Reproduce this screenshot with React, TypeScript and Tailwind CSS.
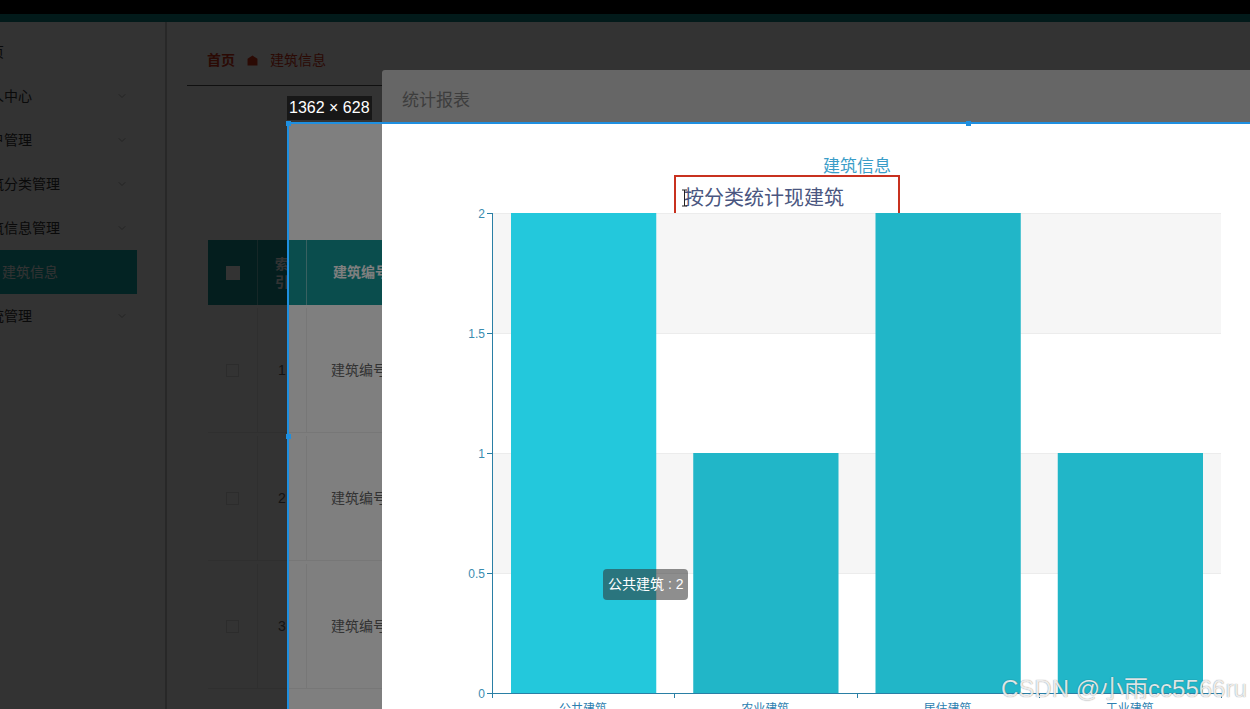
import { ChevronDown } from "lucide-react";

const menu = [
  { label: "首页", arrow: false },
  { label: "个人中心", arrow: true },
  { label: "用户管理", arrow: true },
  { label: "建筑分类管理", arrow: true },
  { label: "建筑信息管理", arrow: true },
];

const rows = [1, 2, 3];

const categories = [
  { name: "公共建筑", value: 2 },
  { name: "农业建筑", value: 1 },
  { name: "居住建筑", value: 2 },
  { name: "工业建筑", value: 1 },
];

const FONT = "'Liberation Sans','Noto Sans CJK SC',sans-serif";

function Sidebar() {
  return (
    <aside className="w-[167px] shrink-0 overflow-hidden border-r-2 border-[#c8c8c8] bg-white pt-[8px]">
      {menu.map((m) => (
        <div key={m.label} className="flex h-[44px] w-[137px] items-center justify-between pr-[9px]">
          <span className="-ml-[24px] whitespace-nowrap text-[14px] text-[#333]">{m.label}</span>
          {m.arrow && <ChevronDown size={12} strokeWidth={1.5} className="text-[#999]" />}
        </div>
      ))}
      <div className="flex h-[44px] w-[137px] items-center bg-[#10b0b0]">
        <span className="ml-[2px] text-[14px] text-white">建筑信息</span>
      </div>
      <div className="flex h-[44px] w-[137px] items-center justify-between pr-[9px]">
        <span className="-ml-[24px] whitespace-nowrap text-[14px] text-[#333]">系统管理</span>
        <ChevronDown size={12} strokeWidth={1.5} className="text-[#999]" />
      </div>
    </aside>
  );
}

function Breadcrumb() {
  return (
    <div className="ml-[20px] flex h-[64px] items-end border-b border-[#555] pb-[15px] pl-[20px]">
      <div className="flex items-center text-[14px] leading-[20px] text-[#d83418]">
        <span className="font-semibold">首页</span>
        <svg width="11" height="11" viewBox="0 0 10 10" className="mx-[12px]">
          <path d="M5 0.5 L9.5 3.5 L9.5 9.5 L0.5 9.5 L0.5 3.5 Z" fill="#d83418" />
        </svg>
        <span>建筑信息</span>
      </div>
    </div>
  );
}

function Table() {
  return (
    <div className="ml-[41px] mt-[154px] w-[900px]">
      <div className="grid h-[65px] grid-cols-[50px_49px_1fr] bg-[#149a9a] text-[14px] font-bold text-white">
        <div className="flex items-center justify-center border-r border-white/40">
          <span className="h-[14px] w-[14px] bg-white" />
        </div>
        <div className="flex items-center justify-center border-r border-white/40">
          <span className="w-[14px] leading-[18px]">索引</span>
        </div>
        <div className="flex items-center pl-[26px]">建筑编号</div>
      </div>
      {rows.map((r) => (
        <div
          key={r}
          className="grid h-[128px] grid-cols-[50px_49px_1fr] border-b border-[#eee] bg-white pt-[3px] text-[14px] text-[#666]"
        >
          <div className="flex items-center justify-center border-r border-[#eee]">
            <span className="h-[13px] w-[13px] border border-[#ddd] bg-white" />
          </div>
          <div className="flex items-center justify-center border-r border-[#eee]">{r}</div>
          <div className="flex items-center pl-[24px]">建筑编号{r}</div>
        </div>
      ))}
    </div>
  );
}

function Chart() {
  const left = 492;
  const right = 1221;
  const top = 213;
  const bottom = 693;
  const slot = (right - left) / 4;
  const yFor = (v: number) => bottom - (v / 2) * (bottom - top);
  const ticks = [
    { v: 2, label: "2" },
    { v: 1.5, label: "1.5" },
    { v: 1, label: "1" },
    { v: 0.5, label: "0.5" },
    { v: 0, label: "0" },
  ];
  return (
    <svg width="900" height="620" className="block" fontFamily={FONT}>
      <g transform="translate(-382,-123)">
        <text x="857" y="172" textAnchor="middle" fontSize="17" fill="#3a9dc8">
          建筑信息
        </text>
        <text x="684" y="205" fontSize="20" fill="#4a5680">
          按分类统计现建筑
        </text>
        <rect x="675" y="176" width="224" height="42" fill="none" stroke="#c8311f" strokeWidth="2" />
        <path d="M682 190 h5 M684.5 190 v16 M682 206 h5" stroke="#222" strokeWidth="1" fill="none" />

        <rect x={left} y={top} width={right - left} height="120" fill="#f6f6f6" />
        <rect x={left} y={top + 240} width={right - left} height="120" fill="#f6f6f6" />
        {[213, 333, 453, 573].map((y) => (
          <line key={y} x1={left} x2={right} y1={y + 0.5} y2={y + 0.5} stroke="#ececec" />
        ))}

        {categories.map((c, i) => {
          const x = left + slot * i + 19;
          const y = yFor(c.value);
          return (
            <rect
              key={c.name}
              x={x}
              y={y}
              width={slot - 37}
              height={bottom - y}
              fill={i === 0 ? "#23c8dc" : "#21b6c8"}
            />
          );
        })}

        <line x1={left + 0.5} x2={left + 0.5} y1={top} y2={bottom} stroke="#2a7fa5" />
        <line x1={left} x2={right} y1={bottom + 0.5} y2={bottom + 0.5} stroke="#2a7fa5" />
        {ticks.map((t) => {
          const y = yFor(t.v) + 0.5;
          return (
            <g key={t.label}>
              <line x1={left - 5} x2={left} y1={y} y2={y} stroke="#2a7fa5" />
              <text x={left - 7} y={y + 4} textAnchor="end" fontSize="12" fill="#3a8cb0">
                {t.label}
              </text>
            </g>
          );
        })}
        {[0, 1, 2, 3, 4].map((i) => {
          const x = Math.round(left + slot * i) + 0.5;
          return <line key={i} x1={x} x2={x} y1={bottom} y2={bottom + 5} stroke="#2a7fa5" />;
        })}
        {categories.map((c, i) => (
          <text
            key={c.name}
            x={left + slot * i + slot / 2}
            y={713}
            textAnchor="middle"
            fontSize="12"
            fill="#2d7fb0"
          >
            {c.name}
          </text>
        ))}
      </g>
    </svg>
  );
}

export default function App() {
  return (
    <div className="relative h-[709px] w-[1250px] overflow-hidden bg-white font-['Liberation_Sans','Noto_Sans_CJK_SC',sans-serif]">
      <div className="h-[14px] bg-black" />
      <div className="h-[8px] bg-[#0f8282]" />
      <div className="flex h-[687px]">
        <Sidebar />
        <main className="flex-1 bg-white">
          <Breadcrumb />
          <Table />
        </main>
      </div>

      {/* modal mask */}
      <div className="absolute inset-0 bg-black/50" />

      {/* modal */}
      <div className="absolute left-[382px] top-[70px] h-[660px] w-[900px] rounded-tl-[3px] bg-white">
        <div className="flex h-[53px] items-center border-b border-[#eee] pl-[20px] pt-[10px] text-[17px] text-[#9a9a9a]">
          统计报表
        </div>
        <Chart />
        <div className="absolute left-[221px] top-[499px] rounded-[4px] bg-[rgba(50,50,50,0.55)] px-[5px] py-[5px] text-[14px] leading-[21px] text-white">
          公共建筑 : 2
        </div>
      </div>

      {/* screenshot tool dimming outside the selection */}
      <div className="absolute left-0 top-0 h-[123px] w-full bg-black/60" />
      <div className="absolute bottom-0 left-0 top-[123px] w-[288px] bg-black/60" />

      {/* selection frame */}
      <div className="absolute left-[288px] right-0 top-[122px] h-[2px] bg-[#1e8fe0]" />
      <div className="absolute bottom-0 left-[287px] top-[122px] w-[2px] bg-[#1e8fe0]" />
      <div className="absolute left-[286px] top-[121px] h-[5px] w-[5px] bg-[#1e8fe0]" />
      <div className="absolute left-[966px] top-[121px] h-[5px] w-[5px] bg-[#1e8fe0]" />
      <div className="absolute left-[286px] top-[434px] h-[5px] w-[5px] bg-[#1e8fe0]" />
      <div className="absolute left-[287px] top-[96px] flex h-[24px] items-center bg-[#141414]/90 px-[2px] text-[16px] text-white">
        1362 × 628
      </div>

      {/* watermark */}
      <div className="absolute left-[1001px] top-[671px] whitespace-nowrap text-[24px] text-white/85 [text-shadow:0_0_1px_rgba(0,0,0,0.55)]">
        CSDN @小雨cc5566ru
      </div>
    </div>
  );
}
